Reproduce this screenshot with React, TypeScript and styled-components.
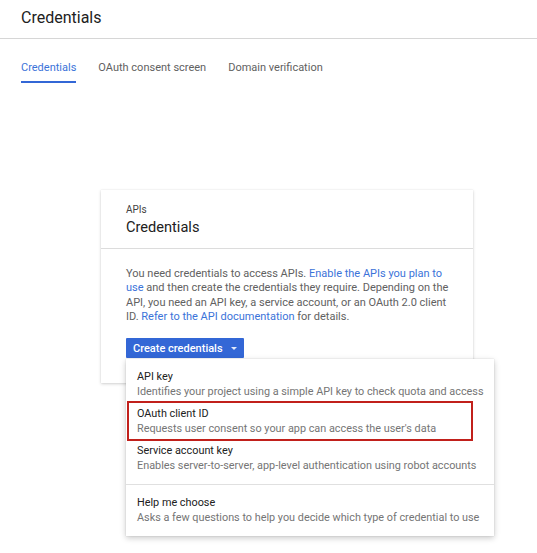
import React from "react";
import styled, { createGlobalStyle } from "styled-components";

const GlobalStyle = createGlobalStyle`
  body {
    margin: 0;
    background: #ffffff;
    font-family: Roboto, "Liberation Sans", Arial, sans-serif;
    color: #212121;
  }
`;

type MenuOption = {
  title: string;
  description: string;
  highlighted?: boolean;
};

const options: MenuOption[] = [
  {
    title: "API key",
    description: "Identifies your project using a simple API key to check quota and access"
  },
  {
    title: "OAuth client ID",
    description: "Requests user consent so your app can access the user's data",
    highlighted: true
  },
  {
    title: "Service account key",
    description: "Enables server-to-server, app-level authentication using robot accounts"
  }
];

const tabs = ["Credentials", "OAuth consent screen", "Domain verification"];

function App() {
  return (
    <Page>
      <GlobalStyle />
      <Header>
        <PageTitle>Credentials</PageTitle>
      </Header>
      <TabBar>
        {tabs.map((tab, i) => (
          <Tab key={tab} active={i === 0}>
            {tab}
          </Tab>
        ))}
      </TabBar>

      <Card>
        <CardHeader>
          <Eyebrow>APIs</Eyebrow>
          <CardTitle>Credentials</CardTitle>
        </CardHeader>
        <CardBody>
          <Intro>
            You need credentials to access APIs. <Link>Enable the APIs you plan to</Link>
            <br />
            <Link>use</Link> and then create the credentials they require. Depending on the
            <br />
            API, you need an API key, a service account, or an OAuth 2.0 client
            <br />
            ID. <Link>Refer to the API documentation</Link> for details.
          </Intro>
          <ButtonAnchor>
            <CreateButton>
              Create credentials
              <Caret />
            </CreateButton>
            <Menu>
              {options.map((opt) => (
                <MenuItem key={opt.title} highlighted={opt.highlighted}>
                  <ItemTitle>{opt.title}</ItemTitle>
                  <ItemDesc>{opt.description}</ItemDesc>
                </MenuItem>
              ))}
              <MenuDivider />
              <MenuItem>
                <ItemTitle>Help me choose</ItemTitle>
                <ItemDesc>Asks a few questions to help you decide which type of credential to use</ItemDesc>
              </MenuItem>
            </Menu>
          </ButtonAnchor>
        </CardBody>
      </Card>
    </Page>
  );
}

const Page = styled.div`
  width: 537px;
  min-height: 553px;
`;

const Header = styled.header`
  height: 39px;
  padding-left: 21px;
  display: flex;
  align-items: center;
  border-bottom: 1px solid #d6d6d6;
  box-sizing: border-box;
`;

const PageTitle = styled.h1`
  margin: 0 0 4px;
  font-size: 16px;
  font-weight: 400;
  color: #212121;
`;

const TabBar = styled.nav`
  display: flex;
  gap: 22px;
  padding-left: 21px;
`;

const Tab = styled.div<{ active?: boolean }>`
  padding: 21px 0 5px;
  line-height: 16px;
  font-size: 11px;
  color: ${(p) => (p.active ? "#3b73d9" : "#616161")};
  border-bottom: 2px solid ${(p) => (p.active ? "#3367d6" : "transparent")};
`;

const Card = styled.section`
  margin: 107px 0 0 101px;
  width: 372px;
  background: #fff;
  box-shadow: 0 1px 3px rgba(0, 0, 0, 0.18), 0 0 1px rgba(0, 0, 0, 0.1);
`;

const CardHeader = styled.div`
  padding: 13px 25px 12px;
  border-bottom: 1px solid #dcdcdc;
`;

const Eyebrow = styled.div`
  font-size: 10px;
  line-height: 14px;
  color: #424242;
`;

const CardTitle = styled.div`
  margin-top: 1px;
  font-size: 14.6px;
  line-height: 18px;
  color: #212121;
`;

const CardBody = styled.div`
  padding: 18px 25px 25px;
`;

const Intro = styled.p`
  margin: 0 0 12px;
  font-size: 11px;
  line-height: 14.4px;
  color: #616161;
  white-space: nowrap;
`;

const Link = styled.span`
  color: #3b73d9;
`;

const ButtonAnchor = styled.div`
  position: relative;
  display: inline-block;
`;

const CreateButton = styled.button`
  display: flex;
  align-items: center;
  gap: 8px;
  height: 20px;
  padding: 0 7px;
  border: none;
  border-radius: 1px;
  background: #3367d6;
  color: #fff;
  font-family: inherit;
  font-size: 11px;
  font-weight: 500;
`;

const Caret = styled.span`
  width: 0;
  height: 0;
  border-left: 3.5px solid transparent;
  border-right: 3.5px solid transparent;
  border-top: 3.5px solid #e3eafa;
  margin-top: 1px;
`;

const Menu = styled.div`
  position: absolute;
  top: 21px;
  left: 0;
  width: 368px;
  padding: 6px 0 8px;
  background: #fff;
  box-shadow: 0 2px 6px rgba(0, 0, 0, 0.22), 0 0 1px rgba(0, 0, 0, 0.2);
  z-index: 2;
`;

const MenuItem = styled.div<{ highlighted?: boolean }>`
  position: relative;
  padding: 3.5px 11px;
  line-height: 15px;
  font-size: 10.85px;

  ${(p) =>
    p.highlighted &&
    `
    &::after {
      content: "";
      position: absolute;
      top: -1px;
      bottom: -2px;
      left: 1px;
      right: 21px;
      border: 2px solid #c1201b;
    }
  `}
`;

const ItemTitle = styled.div`
  color: #212121;
`;

const ItemDesc = styled.div`
  color: #757575;
  white-space: nowrap;
`;

const MenuDivider = styled.div`
  height: 1px;
  margin: 8px 0 6px;
  background: #e0e0e0;
`;

export default App;
